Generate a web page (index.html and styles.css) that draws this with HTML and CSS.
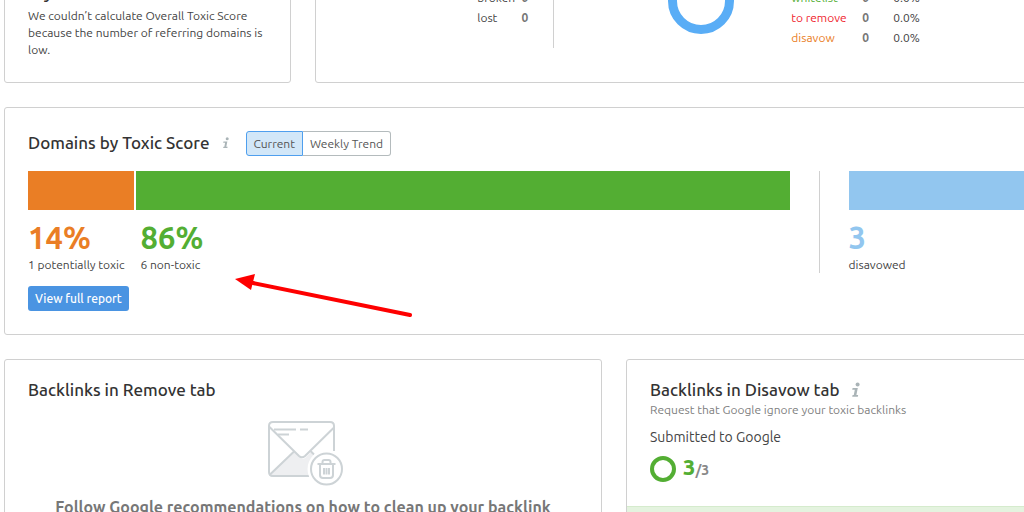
FILE: index.html
```html
<!DOCTYPE html>
<html lang="en">
<head>
  <meta charset="UTF-8" />
  <meta name="viewport" content="width=device-width, initial-scale=1.0"/>
  <title>Backlink Audit</title>
  <link rel="stylesheet" href="styles.css">
</head>
<body>
  <main>
    <div class="overview">
      <section class="card score">
        <h2>Try later</h2>
        <p>We couldn’t calculate Overall Toxic Score because the number of referring domains is low.</p>
      </section>

      <section class="card status">
        <div class="status-list">
          <table>
            <tr><th>new</th><td class="count">0</td></tr>
            <tr><th>broken</th><td class="count">0</td></tr>
            <tr><th>lost</th><td class="count">0</td></tr>
          </table>
        </div>
        <svg class="donut" viewBox="0 0 66 66" aria-hidden="true">
          <circle cx="33" cy="33" r="28.5" fill="none" stroke="#59adf6" stroke-width="9"/>
        </svg>
        <table class="legend">
          <tr><th class="blue">for review</th><td class="count">7</td><td>100%</td></tr>
          <tr><th class="green">whitelist</th><td class="count">0</td><td>0.0%</td></tr>
          <tr><th class="red">to remove</th><td class="count">0</td><td>0.0%</td></tr>
          <tr><th class="orange">disavow</th><td class="count">0</td><td>0.0%</td></tr>
        </table>
      </section>
    </div>

    <section class="card domains">
      <div class="domains-head">
        <h2>Domains by Toxic Score</h2>
        <svg class="info small" viewBox="0 0 10 16" aria-hidden="true">
          <circle cx="6.6" cy="2.4" r="2"/>
          <path d="M1.6 6h5.2L5.4 13h1.8l-.4 1.8H1.2L1.6 13h1.2l1-5.2H1.2z"/>
        </svg>
        <div class="toggle">
          <button type="button" class="active">Current</button>
          <button type="button">Weekly Trend</button>
        </div>
      </div>

      <div class="domains-body">
        <div class="toxic">
          <div class="bar">
            <span class="bg-orange" style="flex-grow: 14"></span>
            <span class="bg-green" style="flex-grow: 86"></span>
          </div>
          <div class="numbers">
            <div><strong class="orange">14%</strong><span>1 potentially toxic</span></div>
            <div><strong class="green">86%</strong><span>6 non-toxic</span></div>
          </div>
        </div>
        <div class="disavowed">
          <div class="bar"><span class="bg-sky" style="flex-grow: 100"></span></div>
          <div class="numbers">
            <div><strong class="sky">3</strong><span>disavowed</span></div>
          </div>
        </div>
      </div>

      <button type="button" class="report">View full report</button>

      <!-- red pointer over the card -->
      <svg class="arrow" viewBox="0 0 180 48" aria-hidden="true">
        <path d="M18 11L175 43" stroke="#fe0000" stroke-width="4" stroke-linecap="round"/>
        <path d="M0 7L20 2L16 18z" fill="#fe0000"/>
      </svg>
    </section>

    <div class="tabs">
      <section class="card remove">
        <h2>Backlinks in Remove tab</h2>
        <svg class="envelope" viewBox="-6 0 82 66" fill="none" stroke="#cdd3d6" stroke-width="2" aria-hidden="true">
          <path d="M2 54L26 31l7 6q2 1.5 4 0l6-6 6 5v20H3z" fill="#eeeff1" stroke="none"/>
          <path d="M66 30V5q0-4-4-4H5Q1 1 1 5v46q0 4 4 4h36"/>
          <path d="M1.5 6L31 35q3 2.5 6 0L65.5 7M2 53.5L25.5 31M43 30.5l3 3"/>
          <path d="M6 8.5h22M32 8.5h8M10 13.5h11"/>
          <circle cx="58.5" cy="48" r="19" fill="#fff" stroke="none"/>
          <circle cx="58.5" cy="48" r="15.5"/>
          <path d="M49.5 43h18M52 43v11q0 3 3 3h7q3 0 3-3V43M54.5 43v-2q0-2 2-2h4q2 0 2 2v2M56 47v6.5M58.5 47v6.5M61 47v6.5"/>
        </svg>
        <p>Follow Google recommendations on how to clean up your backlink profile</p>
      </section>

      <section class="card disavow">
        <div class="disavow-body">
          <div class="disavow-head">
            <h2>Backlinks in Disavow tab</h2>
            <svg class="info" viewBox="0 0 10 16" aria-hidden="true">
              <circle cx="6.6" cy="2.4" r="2"/>
              <path d="M1.6 6h5.2L5.4 13h1.8l-.4 1.8H1.2L1.6 13h1.2l1-5.2H1.2z"/>
            </svg>
          </div>
          <p class="hint">Request that Google ignore your toxic backlinks</p>
          <p class="submitted">Submitted to Google</p>
          <div class="progress">
            <svg viewBox="0 0 26 26" aria-hidden="true">
              <circle cx="13" cy="13" r="11" fill="none" stroke="#53ae33" stroke-width="4"/>
            </svg>
            <p><strong>3</strong>/3</p>
          </div>
        </div>
        <div class="note"></div>
      </section>
    </div>
  </main>
</body>
</html>
```
FILE: styles.css
```css
* {
  box-sizing: border-box;
}

body {
  margin: 0;
  height: 100vh;
  overflow: hidden;
  background: #fff;
  color: #444;
  font-family: Ubuntu, "Noto Sans", sans-serif;
  font-size: 12px;
  line-height: 17px;
}

main {
  width: calc(100% + 196px);
  margin: -56px 0 0 4px;
}

h2,
p {
  margin: 0;
}

h2 {
  color: #333;
  font-size: 17px;
  font-weight: 500;
  line-height: 24px;
}

button {
  height: 25px;
  padding: 0 7px;
  font: inherit;
  white-space: nowrap;
  cursor: pointer;
}

.card {
  border: 1px solid #d0d0d0;
  border-radius: 3px;
  background: #fff;
}

.orange { color: #ea7e25; }
.green { color: #53ae33; }
.red { color: #f0242d; }
.blue { color: #59adf6; }
.sky { color: #92c6ef; }

.bg-orange { background: #ea7e25; }
.bg-green { background: #53ae33; }
.bg-sky { background: #92c6ef; }

/* top row */
.overview {
  display: grid;
  grid-template-columns: repeat(4, 1fr);
  gap: 24px;
}

.score {
  display: flex;
  flex-direction: column;
  justify-content: flex-end;
  padding: 23px 23px 24px;
}

.score h2 {
  margin-bottom: 2px;
}

.status {
  grid-column: span 3;
  display: flex;
  padding: 23px 23px 34px;
}

table {
  border-collapse: collapse;
  line-height: 20px;
}

th,
td {
  padding: 0;
  text-align: left;
  font-weight: 400;
}

td.count {
  color: #777;
  font-weight: 700;
}

.status-list {
  width: 25%;
  border-right: 1px solid #d0d0d0;
}

.status-list table {
  width: 51px;
  margin-left: auto;
  margin-right: 25px;
}

.status-list .count {
  text-align: right;
}

.donut {
  width: 66px;
  height: 66px;
  margin: 0 57px 0 114px;
}

.legend {
  height: 80px;
}

.legend th {
  width: 71px;
}

.legend .count {
  width: 31px;
}

/* toxic score */
.domains {
  position: relative;
  margin-top: 24px;
  padding: 23px;
}

.domains-head {
  display: flex;
  align-items: flex-start;
  margin-bottom: 15px;
}

.info {
  width: 10px;
  height: 16px;
  margin-left: 12px;
  fill: #aab4b7;
}

.info.small {
  width: 8px;
  height: 12px;
  margin-top: 6px;
}

.toggle {
  display: flex;
  margin-left: 16px;
}

.toggle button {
  border: 1px solid #b4bbbd;
  border-left: 0;
  border-radius: 0 3px 3px 0;
  background: #fff;
  color: #555;
}

.toggle .active {
  border: 1px solid #4f9fee;
  border-radius: 3px 0 0 3px;
  background: #d2e7f8;
}

.domains-body {
  display: flex;
  gap: 29px;
}

.toxic {
  flex: 13 1 0;
}

.disavowed {
  flex: 6 1 0;
  padding-left: 29px;
  border-left: 1px solid #d0d0d0;
}

.bar {
  display: flex;
  gap: 2px;
  height: 39px;
}

.bar span {
  flex-basis: 0;
}

.numbers {
  display: flex;
  gap: 16px;
  padding-top: 10px;
}

.numbers strong,
.numbers span {
  display: block;
}

.numbers strong {
  font-size: 31px;
  line-height: 36px;
}

.report {
  display: block;
  margin-top: 13px;
  border: 0;
  border-radius: 3px;
  background: #4a94e2;
  color: #fff;
  font-weight: 500;
}

.arrow {
  position: absolute;
  left: 230px;
  top: 164px;
  width: 180px;
  height: 48px;
}

/* bottom row */
.tabs {
  display: grid;
  grid-template-columns: 1fr 1fr;
  gap: 24px;
  margin-top: 24px;
}

.remove {
  padding: 18px 23px 24px;
}

.envelope {
  display: block;
  width: 82px;
  height: 66px;
  margin: 19px auto 8px;
}

.remove p {
  padding: 0 24px;
  color: #777;
  font-size: 16px;
  font-weight: 700;
  line-height: 24px;
  text-align: center;
}

.disavow-body {
  padding: 18px 23px 23px;
}

.disavow-head {
  display: flex;
  align-items: center;
}

.hint {
  color: #808080;
  line-height: 15px;
}

.submitted {
  margin-top: 10px;
  font-size: 14px;
  line-height: 20px;
}

.progress {
  display: flex;
  align-items: center;
  gap: 7px;
  margin-top: 7px;
}

.progress svg {
  width: 26px;
  height: 26px;
}

.progress p {
  color: #888;
  font-size: 14px;
  font-weight: 700;
  line-height: 26px;
}

.progress strong {
  color: #53ae33;
  font-size: 22px;
}

.note {
  height: 60px;
  border-top: 1px solid #d5ebcd;
  background: #e4f3df;
}
```
